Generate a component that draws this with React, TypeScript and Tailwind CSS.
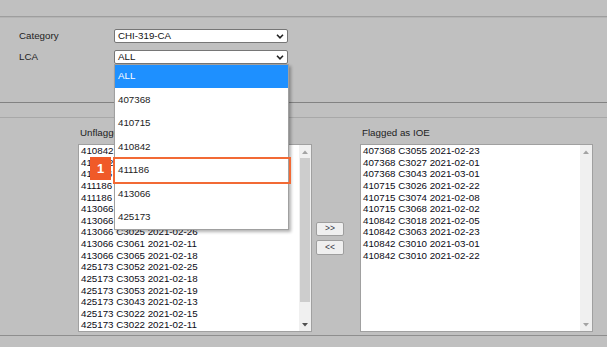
import React from "react";

const leftItems = [
  "410842 C3071 2021-02-09",
  "410842 C3014 2021-02-16",
  "411186 C3040 2021-02-04",
  "411186 C3060 2021-02-12",
  "411186 C3024 2021-02-24",
  "413066 C3013 2021-02-03",
  "413066 C3078 2021-02-10",
  "413066 C3025 2021-02-26",
  "413066 C3061 2021-02-11",
  "413066 C3065 2021-02-18",
  "425173 C3052 2021-02-25",
  "425173 C3053 2021-02-18",
  "425173 C3053 2021-02-19",
  "425173 C3043 2021-02-13",
  "425173 C3022 2021-02-15",
  "425173 C3022 2021-02-11",
];

const rightItems = [
  "407368 C3055 2021-02-23",
  "407368 C3027 2021-02-01",
  "407368 C3043 2021-03-01",
  "410715 C3026 2021-02-22",
  "410715 C3074 2021-02-08",
  "410715 C3068 2021-02-02",
  "410842 C3018 2021-02-05",
  "410842 C3063 2021-02-23",
  "410842 C3010 2021-03-01",
  "410842 C3010 2021-02-22",
];

const options = ["ALL", "407368", "410715", "410842", "411186", "413066", "425173"];

function Chevron() {
  return (
    <svg width="8" height="5" viewBox="0 0 8 5" className="mr-[3px]">
      <path d="M1 0.8 L4 3.8 L7 0.8" fill="none" stroke="#222" strokeWidth="1.6" />
    </svg>
  );
}

function Row({ label, value }: { label: string; value: string }) {
  return (
    <div className="flex items-center">
      <div className="w-[95px] text-[#222] leading-[14px]">{label}</div>
      <div className="w-[174px] h-[14px] bg-white border border-[#767676] rounded-[2px] flex items-center justify-between pl-[3px]">
        <span className="text-[#111] leading-[12px]">{value}</span>
        <Chevron />
      </div>
    </div>
  );
}

function Arrow({ up, color }: { up: boolean; color: string }) {
  return (
    <div className="h-[13px] flex items-center justify-center">
      <svg width="6" height="4" viewBox="0 0 6 4">
        {up ? <path d="M0 4 L3 0.5 L6 4 Z" fill={color} /> : <path d="M0 0 L3 3.5 L6 0 Z" fill={color} />}
      </svg>
    </div>
  );
}

function ListBox({ items, w, thumb }: { items: string[]; w: string; thumb: boolean }) {
  return (
    <div className={`${w} h-[188px] bg-white border border-[#a0a0a0] flex`}>
      <div className="flex-1 overflow-hidden pl-[2px]">
        {items.map((t, i) => (
          <div key={i} className="leading-[11.63px] h-[11.63px] whitespace-nowrap text-[#0a0a14]">
            {t}
          </div>
        ))}
      </div>
      <div className="w-[12px] bg-[#f0f0f0] flex flex-col">
        <Arrow up color="#a3a3a3" />
        <div className="flex-1 px-[1px]">
          {thumb && <div className="h-[144px] bg-[#cdcdcd]" />}
        </div>
        <Arrow up={false} color={thumb ? "#505050" : "#a3a3a3"} />
      </div>
    </div>
  );
}

export default function App() {
  return (
    <div
      className="w-[607px] h-[347px] bg-[#c0c0c0] overflow-hidden relative flex flex-col text-[9.75px]"
      style={{ fontFamily: '"Liberation Sans", Arial, sans-serif' }}
    >
      <div className="h-[16px] shrink-0" />
      <div className="h-[1px] bg-[#9e9e9e] shrink-0" />
      <div className="h-[1px] bg-[#b4b4b4] shrink-0" />
      <div className="h-[84px] shrink-0 pl-[19px] pt-[11px] flex flex-col gap-[7px]">
        <Row label="Category" value="CHI-319-CA" />
        <Row label="LCA" value="ALL" />
      </div>
      <div className="h-[1px] bg-[#828282] shrink-0" />
      <div className="h-[14px] shrink-0" />
      <div className="h-[1px] bg-[#a8a8a8] shrink-0" />
      <div className="h-[217px] shrink-0 flex pl-[78px] pt-[9px]">
        <div className="flex flex-col">
          <div className="h-[12px] leading-[12px] pl-[2px] mb-[5px] text-[#222]">Unflagged</div>
          <ListBox items={leftItems} w="w-[234px]" thumb />
        </div>
        <div className="w-[48px] pl-[4px] pt-[17px]">
          <div className="h-[188px] flex flex-col justify-center gap-[4px]">
            <div className="w-[28px] h-[14px] bg-[#efefef] border border-[#9e9e9e] rounded-[2px] flex items-center justify-center text-[8.5px] text-[#334] leading-none">
              &gt;&gt;
            </div>
            <div className="w-[28px] h-[15px] bg-[#efefef] border border-[#9e9e9e] rounded-[2px] flex items-center justify-center text-[8.5px] text-[#334] leading-none">
              &lt;&lt;
            </div>
          </div>
        </div>
        <div className="flex flex-col">
          <div className="h-[12px] leading-[12px] pl-[2px] mb-[5px] text-[#222]">Flagged as IOE</div>
          <ListBox items={rightItems} w="w-[233px]" thumb={false} />
        </div>
      </div>
      <div className="h-[1px] bg-[#8e8e8e] shrink-0" />
      <div className="flex-1" />

      {/* dropdown menu */}
      <div className="absolute top-[64px] left-[114px] w-[175px] bg-white border border-[#a0a0a0] shadow-[2px_2px_3px_rgba(0,0,0,0.3)]">
        {options.map((o, i) => (
          <div
            key={o}
            className={`h-[23.43px] flex items-center pl-[3px] ${i === 0 ? "bg-[#1e90ff] text-white" : "text-[#222]"}`}
          >
            {o}
          </div>
        ))}
      </div>

      {/* highlight */}
      <div className="absolute top-[157px] left-[113px] w-[178px] h-[27px] border-2 border-[#f26a35]" />
      <div className="absolute top-[157px] left-[90px] w-[21px] h-[23px] bg-[#f05a28] text-white font-bold text-[13px] flex items-center justify-center">
        1
      </div>
    </div>
  );
}
